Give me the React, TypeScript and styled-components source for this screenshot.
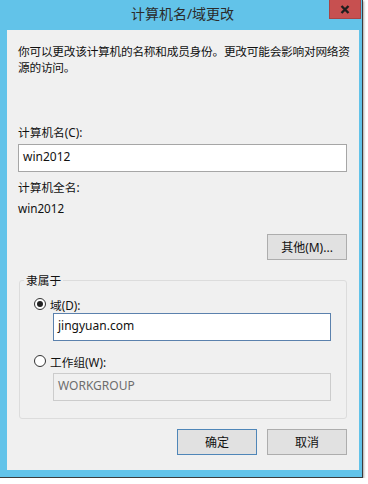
import { createGlobalStyle, styled } from "styled-components";

const GlobalStyle = createGlobalStyle`
  html, body {
    margin: 0;
    padding: 0;
    background: #ffffff;
  }
  body {
    font-family: "Noto Sans", "Noto Sans CJK SC", sans-serif;
    font-size: 11.7px;
    color: #111;
  }
`;

const Window = styled.div`
  width: 363px;
  height: 478px;
  box-sizing: border-box;
  background: #62c3e9;
  border-right: 1px solid #3c3c3c;
  border-bottom: 1px solid #3c3c3c;
  box-shadow: 1px 1px 2px rgba(0, 0, 0, 0.35);
  display: flex;
  flex-direction: column;
  padding: 0 3px 7px 7px;
`;

const TitleBar = styled.div`
  height: 30px;
  display: grid;
  grid-template-columns: 1fr auto 1fr;
  margin-left: -7px;
  margin-right: -2px;
`;

const Title = styled.div`
  grid-column: 2;
  font-size: 14px;
  line-height: 28px;
  color: #2b2b2b;
  padding-left: 4px;
`;

const CloseButton = styled.div`
  grid-column: 3;
  justify-self: end;
  align-self: start;
  width: 32px;
  height: 19px;
  background: #c75050;
  border: 1px solid #a84444;
  border-top: none;
  box-sizing: border-box;
  display: flex;
  align-items: center;
  justify-content: center;
`;

const Client = styled.div`
  flex: 1;
  background: #f0f0f0;
  padding: 13px 12px 0 11px;
  display: flex;
  flex-direction: column;
`;

const Text = styled.div<{ $top?: number }>`
  line-height: 16px;
  margin-top: ${(p) => p.$top ?? 0}px;
`;

const Description = styled.div`
  line-height: 16px;
  word-break: break-all;
  letter-spacing: -0.25px;
  margin-right: -8px;
`;

const TextBox = styled.div<{ $top?: number; $focused?: boolean; $disabled?: boolean }>`
  height: 28px;
  box-sizing: border-box;
  margin-top: ${(p) => p.$top ?? 0}px;
  background: ${(p) => (p.$disabled ? "#f0f0f0" : "#ffffff")};
  border: 1px solid
    ${(p) => (p.$focused ? "#5b81ad" : p.$disabled ? "#cccccc" : "#a6a6a6")};
  color: ${(p) => (p.$disabled ? "#6d6d6d" : "#111")};
  padding: 0 4px;
  line-height: 24px;
  font-size: 12px;
`;

const Button = styled.div<{ $default?: boolean }>`
  width: 80px;
  height: 26px;
  box-sizing: border-box;
  background: #e1e1e1;
  border: 1px solid ${(p) => (p.$default ? "#4f86b8" : "#adadad")};
  display: flex;
  align-items: center;
  justify-content: center;
  font-size: 12px;
`;

const RightRow = styled.div<{ $top: number }>`
  display: flex;
  justify-content: flex-end;
  gap: 10px;
  margin-top: ${(p) => p.$top}px;
`;

const Group = styled.fieldset`
  margin: 12px 0 0 1px;
  width: 328px;
  box-sizing: border-box;
  border: 1px solid #dcdcdc;
  border-radius: 3px;
  padding: 0 14px 17px 14px;
  display: flex;
  flex-direction: column;
`;

const Legend = styled.legend`
  margin-left: -10px;
  padding: 0 2px;
  line-height: 16px;
`;

const RadioRow = styled.div<{ $top: number }>`
  display: flex;
  align-items: center;
  gap: 4px;
  height: 16px;
  margin-top: ${(p) => p.$top}px;
`;

const Radio = styled.span<{ $checked?: boolean }>`
  width: 12px;
  height: 12px;
  box-sizing: border-box;
  border: 1px solid #333;
  border-radius: 50%;
  background: #fff;
  display: flex;
  align-items: center;
  justify-content: center;

  &::after {
    content: "";
    width: 6px;
    height: 6px;
    border-radius: 50%;
    background: ${(p) => (p.$checked ? "#222" : "transparent")};
  }
`;

const Indented = styled.div`
  margin-left: 19px;
  width: 278px;
`;

export default function App() {
  return (
    <>
      <GlobalStyle />
      <Window>
        <TitleBar>
          <Title>计算机名/域更改</Title>
          <CloseButton>
            <svg width="10" height="9" viewBox="0 0 10 9">
              <path d="M1.5 1 L8.5 8 M8.5 1 L1.5 8" stroke="#1e1e1e" strokeWidth="2.4" />
            </svg>
          </CloseButton>
        </TitleBar>
        <Client>
          <Description>
            你可以更改该计算机的名称和成员身份。更改可能会影响对网络资源的访问。
          </Description>
          <Text $top={49}>计算机名(C):</Text>
          <TextBox $top={4}>win2012</TextBox>
          <Text $top={7}>计算机全名:</Text>
          <Text $top={5}>win2012</Text>
          <RightRow $top={18}>
            <Button>其他(M)...</Button>
          </RightRow>
          <Group>
            <Legend>隶属于</Legend>
            <RadioRow $top={8}>
              <Radio $checked />
              <span>域(D):</span>
            </RadioRow>
            <Indented>
              <TextBox $top={1} $focused>
                jingyuan.com
              </TextBox>
            </Indented>
            <RadioRow $top={12}>
              <Radio />
              <span>工作组(W):</span>
            </RadioRow>
            <Indented>
              <TextBox $top={4} $disabled>
                WORKGROUP
              </TextBox>
            </Indented>
          </Group>
          <RightRow $top={10}>
            <Button $default>确定</Button>
            <Button>取消</Button>
          </RightRow>
        </Client>
      </Window>
    </>
  );
}
